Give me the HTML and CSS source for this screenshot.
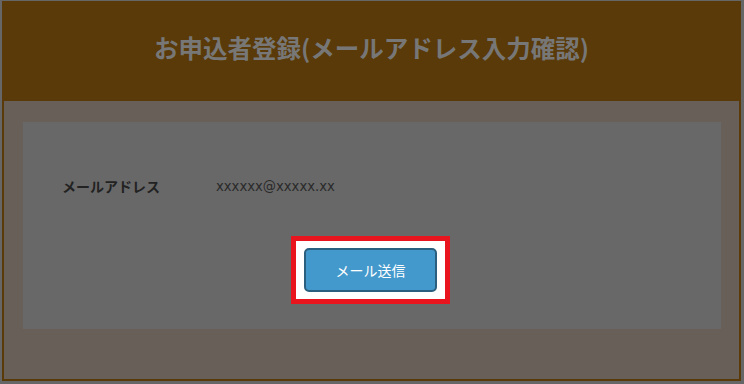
FILE: index.html
```html
<!DOCTYPE html>
<html lang="ja">
<head>
    <meta charset="UTF-8">
    <meta name="viewport" content="width=device-width, initial-scale=1.0">
    <title>お申込者登録</title>
    <link rel="stylesheet" href="styles.css">
</head>
<body>
    <div class="page">
        <div class="page-header">
            <h1 class="page-title">お申込者登録(メールアドレス入力確認)</h1>
        </div>
        <div class="page-body">
            <div class="confirm-panel">
                <div class="confirm-row">
                    <span class="confirm-label">メールアドレス</span>
                    <span class="confirm-value">xxxxxx@xxxxx.xx</span>
                </div>
                <div class="action-row">
                    <div class="highlight">
                        <button class="send-button" type="button">メール送信</button>
                    </div>
                </div>
            </div>
        </div>
    </div>
</body>
</html>
```

FILE: styles.css
```css
* {
    margin: 0;
    padding: 0;
    box-sizing: border-box;
}
html, body {
    width: 744px;
    height: 384px;
    overflow: hidden;
}
body {
    background-color: #666;
    padding: 1px 3px 3px 2px;
    font-family: "Noto Sans CJK JP", "Noto Sans", sans-serif;
}
.page {
    width: 739px;
    height: 380px;
    border: 2px solid #5a3a08;
    border-top: none;
    background-color: #675f58;
    display: flex;
    flex-direction: column;
}
.page-header {
    height: 100px;
    background-color: #5a3a08;
    display: flex;
    align-items: center;
    justify-content: center;
}
.page-title {
    font-size: 24.5px;
    font-weight: bold;
    color: #777;
    margin-top: -7px;
}
.page-body {
    padding: 21px 18px 0 19px;
}
.confirm-panel {
    background-color: #686868;
    height: 207px;
    padding: 50px 0 0 39px;
}
.confirm-row {
    display: flex;
    align-items: center;
    height: 28px;
}
.confirm-label {
    width: 154px;
    font-size: 14px;
    font-weight: bold;
    color: #222;
}
.confirm-value {
    font-family: "DejaVu Sans", sans-serif;
    font-size: 13.2px;
    color: #2a2a2a;
}
.action-row {
    display: flex;
    justify-content: center;
    margin-top: 36px;
    margin-left: -39px;
    padding-right: 3px;
}
.highlight {
    border: 5px solid #e8151f;
    background-color: #fff;
    padding: 7px 8px;
}
.send-button {
    display: block;
    width: 133px;
    height: 44px;
    background-color: #4499cc;
    border: 2px solid #2b5f7f;
    border-radius: 5px;
    color: #fff;
    font-family: "Noto Sans CJK JP", sans-serif;
    font-size: 14px;
}
```
